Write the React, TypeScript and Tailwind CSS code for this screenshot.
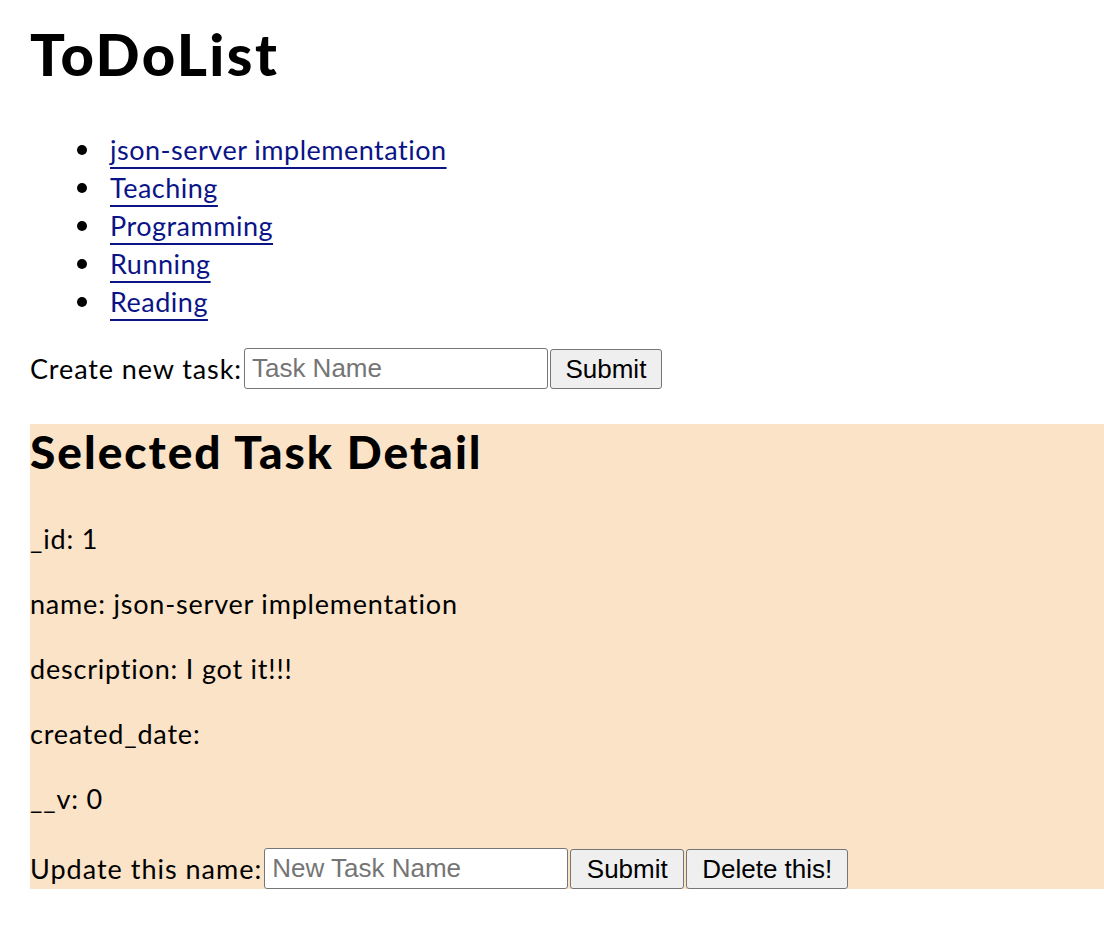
const TASKS = [
  'json-server implementation',
  'Teaching',
  'Programming',
  'Running',
  'Reading',
]

const DETAIL = [
  ['_id', '1'],
  ['name', 'json-server implementation'],
  ['description', 'I got it!!!'],
  ['created_date', ''],
  ['__v', '0'],
]

const inputCls =
  "h-[41px] w-[304px] rounded-[3px] border border-[#767676] bg-white px-[7px] font-['Liberation_Sans',Arial,sans-serif] text-[26px] tracking-normal text-black placeholder:text-[#757575] outline-none"
const btnCls =
  "ml-[2px] h-[40px] rounded-[3px] border border-[#767676] bg-[#efefef] px-[10px] font-['Liberation_Sans',Arial,sans-serif] text-[26px] tracking-normal text-black"

export default function App() {
  return (
    <div className="min-h-[928px] bg-white pl-[30px] font-['Lato','Noto_Sans',sans-serif] text-black">
      <h1 className="pt-[22px] text-[58px] font-black leading-[64px] tracking-[2.4px]">ToDoList</h1>

      <ul className="mt-[45px] pl-[47px] text-[27px] leading-[38px] tracking-[0.5px]">
        {TASKS.map((t) => (
          <li key={t} className="flex items-center">
            <span className="mr-[23px] size-[10px] shrink-0 rounded-full bg-black" />
            <a
              href="#"
              className="text-[#0b1487] underline decoration-2 underline-offset-[7px]"
            >
              {t}
            </a>
          </li>
        ))}
      </ul>

      <form className="mt-[27px] flex items-center text-[27px] leading-[38px] tracking-[0.9px]">
        <label>Create new task:</label>
        <input className={`ml-[2px] ${inputCls}`} placeholder="Task Name" />
        <button type="button" className={`${btnCls} w-[112px]`}>
          Submit
        </button>
      </form>

      <div className="mt-[35px] bg-[#fbe3c8] text-[27px] leading-[38px] tracking-[0.8px]">
        <h2 className="pt-[2px] pb-[15px] text-[46px] font-black leading-[52px] tracking-[2px]">
          Selected Task Detail
        </h2>
        {DETAIL.map(([k, v]) => (
          <p key={k} className="mt-[27px]">
            {k}: {v}
          </p>
        ))}
        <div className="mt-[30px] flex items-center">
          <label className="tracking-[1px]">Update this name:</label>
          <input className={`ml-[2px] ${inputCls}`} placeholder="New Task Name" />
          <button type="button" className={`${btnCls} w-[114px]`}>
            Submit
          </button>
          <button type="button" className={`${btnCls} w-[162px]`}>
            Delete this!
          </button>
        </div>
      </div>
    </div>
  )
}
